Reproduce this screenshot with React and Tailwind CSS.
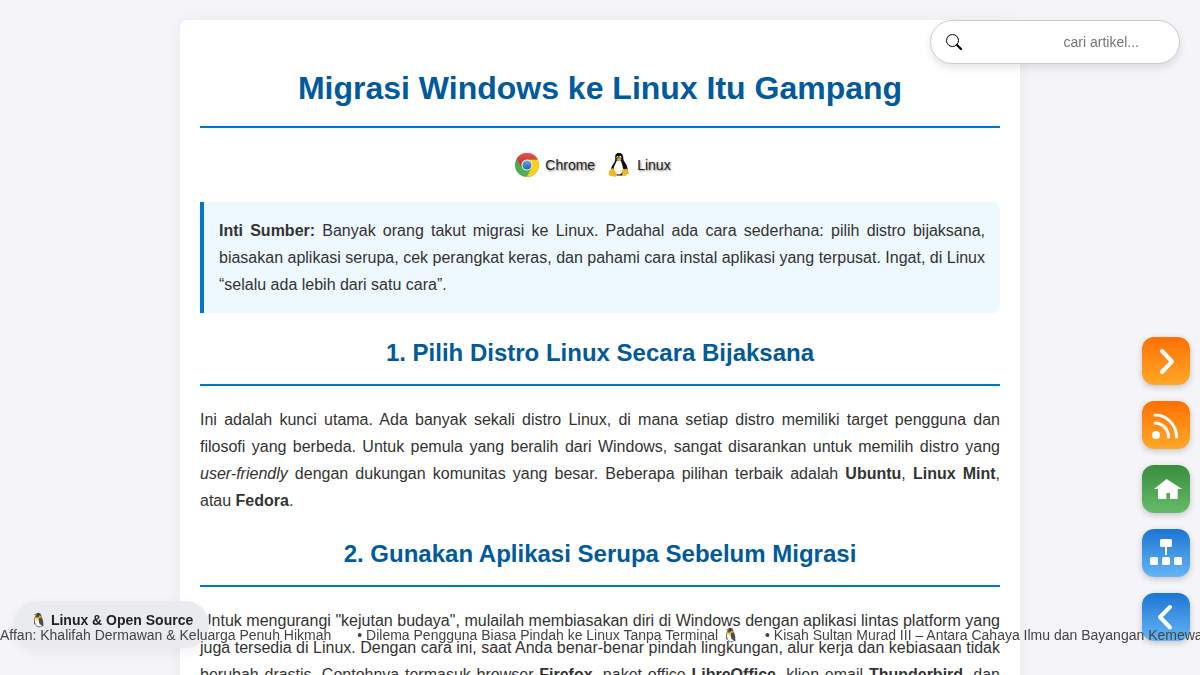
import React from "react";

function ChromeLogo() {
  return (
    <svg viewBox="0 0 48 48" className="size-6" aria-hidden="true">
      <defs>
        <linearGradient id="chrome-red" x1="0" y1="0" x2="0" y2="1">
          <stop offset="0" stopColor="#e8544a" />
          <stop offset="1" stopColor="#c9201c" />
        </linearGradient>
        <linearGradient id="chrome-green" x1="0" y1="0" x2="1" y2="1">
          <stop offset="0" stopColor="#3fa34a" />
          <stop offset="1" stopColor="#5cb85c" />
        </linearGradient>
        <linearGradient id="chrome-blue" x1="0" y1="0" x2="0" y2="1">
          <stop offset="0" stopColor="#6fa8dc" />
          <stop offset="1" stopColor="#1f62ac" />
        </linearGradient>
      </defs>
      <circle cx="24" cy="24" r="24" fill="url(#chrome-green)" />
      <path d="M24 13h21.3A24 24 0 0 1 23.5 48L33.5 29.5z" fill="#fdd017" />
      <path d="M3.2 12A24 24 0 0 1 45.4 13H24a11 11 0 0 0-9.6 16.5z" fill="url(#chrome-red)" />
      <circle cx="24" cy="24" r="11" fill="#eef2f4" />
      <circle cx="24" cy="24" r="9" fill="url(#chrome-blue)" />
    </svg>
  );
}

function TuxLogo() {
  return (
    <svg viewBox="0 0 48 48" className="size-6" aria-hidden="true">
      <path d="M24 0c-6 0-8 4-7.500 9.500.3 5-.5 7.500-3.500 12C9 27 7 32 8 37l9 8h14l10-9c1-6-1.500-12-5-17-3-4-3.500-6-3.500-10C32.500 4 30 0 24 0z" fill="#0b0b0b" />
      <path d="M19.500 15c-1 6-6.500 10-6 18 .5 6 4.500 10 9.500 10s9-4 9-11c0-6-3-12-4.500-17z" fill="#fff" />
      <ellipse cx="21" cy="8.500" rx="1.800" ry="2.600" fill="#fff" />
      <ellipse cx="26.500" cy="8.500" rx="2.200" ry="2.800" fill="#fff" />
      <circle cx="21.300" cy="9" r="1" fill="#111" />
      <circle cx="26" cy="9" r="1.100" fill="#111" />
      <path d="M18.500 12.500l5-2.500 6 2.500-5.500 4z" fill="#e8a90c" />
      <path d="M9 31c3-1.500 5 1 7 5l4 6c1 4-2 6-5 5.500L4.500 45c-2-1-.5-3-.5-5s-1-4 1-5 3-1.500 4-4z" fill="#f5b81a" />
      <path d="M31 33c0-3 2-2 4-.5 2 .5 4-2 5 0 .5 3 1 4 4 6 1.500 2-2 3-5 5-2.500 3-6 4-8 2-2-3 0-8 0-12.500z" fill="#f5b81a" />
    </svg>
  );
}

function SearchIcon() {
  return (
    <svg viewBox="0 0 16 16" className="size-4" fill="none" stroke="currentColor" aria-hidden="true">
      <circle cx="6.500" cy="6.500" r="6" strokeWidth="1" />
      <path d="M10.800 10.800L15.200 15.200" strokeWidth="2.200" strokeLinecap="round" />
    </svg>
  );
}

const navItems = [
  {
    label: "Berikutnya",
    tone: "from-[#ff6f00] to-[#ffa726]",
    icon: <path d="M20 14l10 10.500L20 35" fill="none" stroke="#fff" strokeWidth="4" strokeLinecap="round" strokeLinejoin="round" />,
  },
  {
    label: "RSS",
    tone: "from-[#ff6f00] to-[#ffa726]",
    icon: (
      <g fill="none" stroke="#fff" strokeWidth="3" strokeLinecap="round">
        <circle cx="14" cy="34" r="4" fill="#fff" stroke="none" />
        <path d="M13 22a13.500 14 0 0 1 13.500 14" />
        <path d="M13 14a21.500 22 0 0 1 21.500 22" />
      </g>
    ),
  },
  {
    label: "Beranda",
    tone: "from-[#388e3c] to-[#66bb6a]",
    icon: <path d="M24.500 14L12 24h4v10h8.300v-6h3.700v6h7.700V24H40z" fill="#fff" />,
  },
  {
    label: "Peta situs",
    tone: "from-[#1976d2] to-[#64b5f6]",
    icon: (
      <g fill="#fff">
        <rect x="18" y="10" width="12" height="8" rx="1.500" />
        <rect x="23" y="17" width="2" height="9" />
        <rect x="8" y="28" width="8" height="8" rx="1.500" />
        <rect x="20" y="28" width="8" height="8" rx="1.500" />
        <rect x="32" y="28" width="8" height="8" rx="1.500" />
      </g>
    ),
  },
  {
    label: "Sebelumnya",
    tone: "from-[#1976d2] to-[#64b5f6]",
    icon: <path d="M28 14L18 24l10 10.500" fill="none" stroke="#fff" strokeWidth="4" strokeLinecap="round" strokeLinejoin="round" />,
  },
];

const news = [
  "Affan: Khalifah Dermawan & Keluarga Penuh Hikmah",
  "• Dilema Pengguna Biasa Pindah ke Linux Tanpa Terminal 🐧",
  "• Kisah Sultan Murad III – Antara Cahaya Ilmu dan Bayangan Kemewahan",
];

function SectionTitle({ children }) {
  return (
    <h2 className="my-5 border-b-2 border-[#0077cc] pb-[11px] text-center text-2xl leading-10 font-bold text-[#005a9c]">
      {children}
    </h2>
  );
}

export default function App() {
  return (
    <div className="min-h-screen bg-[#f4f4f9] p-5 font-['Liberation_Sans',Arial,sans-serif] text-base leading-[27px] text-[#333]">
      <main className="mx-auto max-w-[840px] rounded-lg bg-white px-5 pt-[42px] pb-5 shadow-[0_0_15px_rgba(0,0,0,0.05)]">
        <h1 className="border-b-2 border-[#0077cc] pb-3 text-center text-[32px] leading-[52px] font-bold text-[#005a9c]">
          Migrasi Windows ke Linux Itu Gampang
        </h1>
        <div className="flex h-[74px] items-center justify-center gap-3 pr-[14px] text-sm text-[#222] [text-shadow:1px_1px_2px_rgba(0,0,0,0.5)]">
          <span className="flex items-center gap-[6px]">
            <ChromeLogo />
            Chrome
          </span>
          <span className="flex items-center gap-[6px]">
            <TuxLogo />
            Linux
          </span>
        </div>
        <p className="rounded-r-lg border-l-4 border-[#0077cc] bg-[#eef8ff] p-[15px] text-justify">
          <b>Inti Sumber:</b> Banyak orang takut migrasi ke Linux. Padahal ada cara sederhana: pilih distro bijaksana,
          biasakan aplikasi serupa, cek perangkat keras, dan pahami cara instal aplikasi yang terpusat. Ingat, di Linux
          “selalu ada lebih dari satu cara”.
        </p>
        <SectionTitle>1. Pilih Distro Linux Secara Bijaksana</SectionTitle>
        <p className="text-justify">
          Ini adalah kunci utama. Ada banyak sekali distro Linux, di mana setiap distro memiliki target pengguna dan
          filosofi yang berbeda. Untuk pemula yang beralih dari Windows, sangat disarankan untuk memilih distro yang{" "}
          <i>user-friendly</i> dengan dukungan komunitas yang besar. Beberapa pilihan terbaik adalah <b>Ubuntu</b>,{" "}
          <b>Linux Mint</b>, atau <b>Fedora</b>.
        </p>
        <SectionTitle>2. Gunakan Aplikasi Serupa Sebelum Migrasi</SectionTitle>
        <p className="text-justify">
          Untuk mengurangi "kejutan budaya", mulailah membiasakan diri di Windows dengan aplikasi lintas platform yang
          juga tersedia di Linux. Dengan cara ini, saat Anda benar-benar pindah lingkungan, alur kerja dan kebiasaan
          tidak berubah drastis. Contohnya termasuk browser <b>Firefox</b>, paket office <b>LibreOffice</b>, klien email{" "}
          <b>Thunderbird</b>, dan pemutar media <b>VLC</b>.
        </p>
      </main>

      <form
        role="search"
        className="fixed top-5 right-5 flex h-11 w-[250px] items-center rounded-full border border-[#ccc] bg-white pr-10 pl-[15px] shadow-[0_4px_8px_rgba(0,0,0,0.1)]"
      >
        <label htmlFor="q" aria-label="Cari artikel" className="text-black">
          <SearchIcon />
        </label>
        <input
          id="q"
          type="text"
          placeholder="cari artikel..."
          className="min-w-0 flex-1 bg-transparent text-right text-sm outline-none placeholder:text-[#757575]"
        />
      </form>

      <nav className="fixed right-[10px] bottom-[34px] flex flex-col gap-4">
        {navItems.map((item) => (
          <a
            key={item.label}
            href="#"
            aria-label={item.label}
            className={"block size-12 rounded-xl bg-linear-to-b shadow-[0_2px_6px_rgba(0,0,0,0.2)] " + item.tone}
          >
            <svg viewBox="0 0 48 48" className="size-12" aria-hidden="true">
              {item.icon}
            </svg>
          </a>
        ))}
      </nav>

      <a
        href="#"
        className="fixed bottom-[27px] left-[14px] flex h-[47px] items-start rounded-full bg-[#e9ebee] px-4 pt-2 text-sm leading-[22px] font-bold text-[#222] shadow-[0_4px_12px_rgba(0,0,0,0.06)]"
      >
        🐧 Linux &amp; Open Source
      </a>

      <div className="fixed inset-x-0 bottom-[30px] flex gap-[26px] overflow-hidden text-sm leading-5 whitespace-nowrap text-[#444]">
        {news.map((item) => (
          <span key={item} className="shrink-0">
            {item}
          </span>
        ))}
      </div>
    </div>
  );
}
